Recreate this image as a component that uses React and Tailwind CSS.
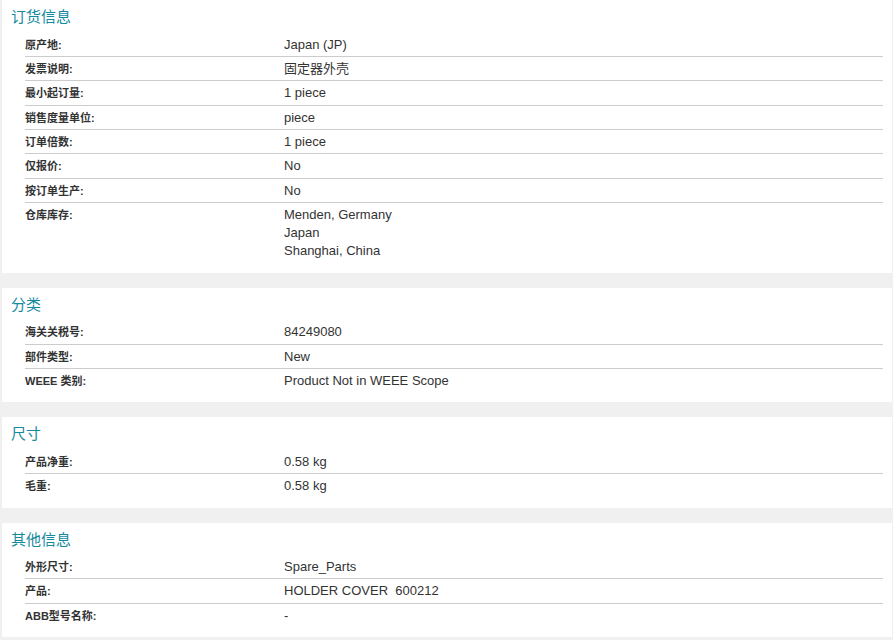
import React from 'react';

const sections = [
  {
    title: '订货信息',
    rows: [
      ['原产地:', ['Japan (JP)']],
      ['发票说明:', ['固定器外壳']],
      ['最小起订量:', ['1 piece']],
      ['销售度量单位:', ['piece']],
      ['订单倍数:', ['1 piece']],
      ['仅报价:', ['No']],
      ['按订单生产:', ['No']],
      ['仓库库存:', ['Menden, Germany', 'Japan', 'Shanghai, China']],
    ],
  },
  {
    title: '分类',
    rows: [
      ['海关关税号:', ['84249080']],
      ['部件类型:', ['New']],
      ['WEEE 类别:', ['Product Not in WEEE Scope']],
    ],
  },
  {
    title: '尺寸',
    rows: [
      ['产品净重:', ['0.58 kg']],
      ['毛重:', ['0.58 kg']],
    ],
  },
  {
    title: '其他信息',
    rows: [
      ['外形尺寸:', ['Spare_Parts']],
      ['产品:', ['HOLDER COVER\u00a0\u00a0600212']],
      ['ABB型号名称:', ['-']],
    ],
  },
];

const Section = ({ title, rows }) => (
  <div className="bg-white pt-[7px] pb-[10px]">
    <h2 className="pl-[9px] text-[15px] leading-[20px] text-[#138a9e] font-normal">{title}</h2>
    <div className="mt-[5.5px] ml-[23px] mr-[9px] divide-y divide-[#cccccc]">
      {rows.map(([label, values]) => (
        <div key={label} className="flex pt-[3px] pb-[2.4px]">
          <div className="w-[259px] shrink-0 text-[11px] font-bold leading-[18px] text-[#333333]">{label}</div>
          <div className="text-[13px] leading-[18px] text-[#333333]">
            {values.map((v) => (
              <div key={v}>{v}</div>
            ))}
          </div>
        </div>
      ))}
    </div>
  </div>
);

export default function App() {
  return (
    <div
      className="min-h-[640px] bg-[#f0f0f0] pl-[2px] pr-[1px] flex flex-col gap-[15px]"
      style={{ fontFamily: '"Liberation Sans", Arial, "Noto Sans CJK SC", sans-serif' }}
    >
      {sections.map((s) => (
        <Section key={s.title} {...s} />
      ))}
    </div>
  );
}
